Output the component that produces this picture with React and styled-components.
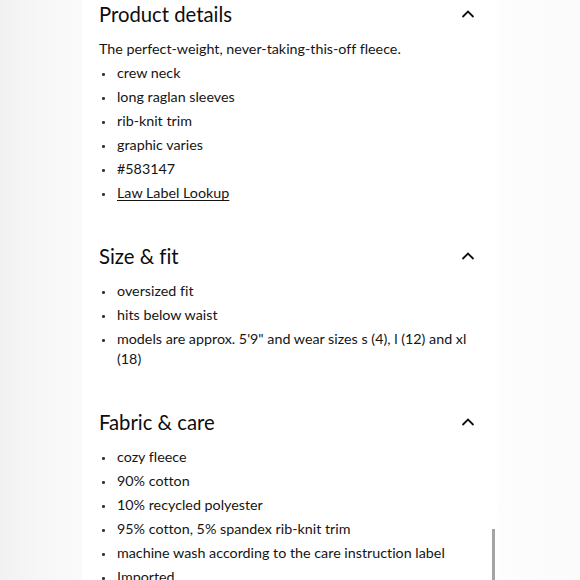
import React from "react";
import styled, { createGlobalStyle } from "styled-components";

const Global = createGlobalStyle`
  html, body { margin: 0; padding: 0; }
  body {
    width: 580px;
    height: 580px;
    overflow: hidden;
    background: linear-gradient(90deg, #f1f1f1 0px, #f7f7f7 40px, #fafafa 82px, #fdfdfd 500px, #fbfbfb 580px);
    font-family: Lato, "Noto Sans", sans-serif;
    font-variant-ligatures: none;
    color: #151515;
  }
`;

const Page = styled.div`
  position: relative;
  width: 580px;
  height: 580px;
  overflow: hidden;
`;

const Panel = styled.div`
  margin-left: 82px;
  width: 415px;
  min-height: 580px;
  background: #ffffff;
  box-sizing: border-box;
  padding: 0 22px 0 17px;
  display: flex;
  flex-direction: column;
  gap: 39px;
`;

const Section = styled.section`
  display: flex;
  flex-direction: column;
  gap: 11px;
`;

const Header = styled.div`
  height: 28px;
  display: flex;
  align-items: center;
  justify-content: space-between;
`;

const Title = styled.h2`
  margin: 0;
  font-size: 20.3px;
  font-weight: 400;
  line-height: 28px;
  color: #0d0d0d;
`;

const Body = styled.div`
  display: flex;
  flex-direction: column;
  gap: 4px;
  font-size: 14.3px;
  line-height: 20px;
`;

const Intro = styled.p`
  margin: 0;
`;

const List = styled.ul`
  list-style: none;
  margin: 0;
  padding: 0;
  display: flex;
  flex-direction: column;
  gap: 4px;
`;

const Item = styled.li`
  position: relative;
  padding-left: 18px;
  &::before {
    content: "";
    position: absolute;
    left: 3px;
    top: 10px;
    width: 2.5px;
    height: 2.5px;
    border-radius: 50%;
    background: #333;
  }
`;

const Link = styled.a`
  color: inherit;
  text-decoration: underline;
  text-underline-offset: 2px;
`;

const Scrollbar = styled.div`
  position: absolute;
  left: 492px;
  top: 529px;
  width: 3px;
  height: 60px;
  background: #a4a4a4;
`;

const Chevron = () => (
  <svg width="14" height="8" viewBox="0 0 14 8" fill="none">
    <polyline points="1.5,7 7,1.5 12.5,7" stroke="#111" strokeWidth="1.8" />
  </svg>
);

const sections = [
  {
    title: "Product details",
    intro: "The perfect-weight, never-taking-this-off fleece.",
    items: ["crew neck", "long raglan sleeves", "rib-knit trim", "graphic varies", "#583147", { link: "Law Label Lookup" }],
  },
  {
    title: "Size & fit",
    items: ["oversized fit", "hits below waist", "models are approx. 5'9\" and wear sizes s (4), l (12) and xl (18)"],
  },
  {
    title: "Fabric & care",
    items: [
      "cozy fleece",
      "90% cotton",
      "10% recycled polyester",
      "95% cotton, 5% spandex rib-knit trim",
      "machine wash according to the care instruction label",
      "Imported.",
    ],
  },
];

export default function App() {
  return (
    <Page>
      <Global />
      <Panel>
        {sections.map((s) => (
          <Section key={s.title}>
            <Header>
              <Title>{s.title}</Title>
              <Chevron />
            </Header>
            <Body>
              {s.intro && <Intro>{s.intro}</Intro>}
              <List>
                {s.items.map((it, i) => (
                  <Item key={i}>{typeof it === "string" ? it : <Link href="#">{it.link}</Link>}</Item>
                ))}
              </List>
            </Body>
          </Section>
        ))}
      </Panel>
      <Scrollbar />
    </Page>
  );
}
